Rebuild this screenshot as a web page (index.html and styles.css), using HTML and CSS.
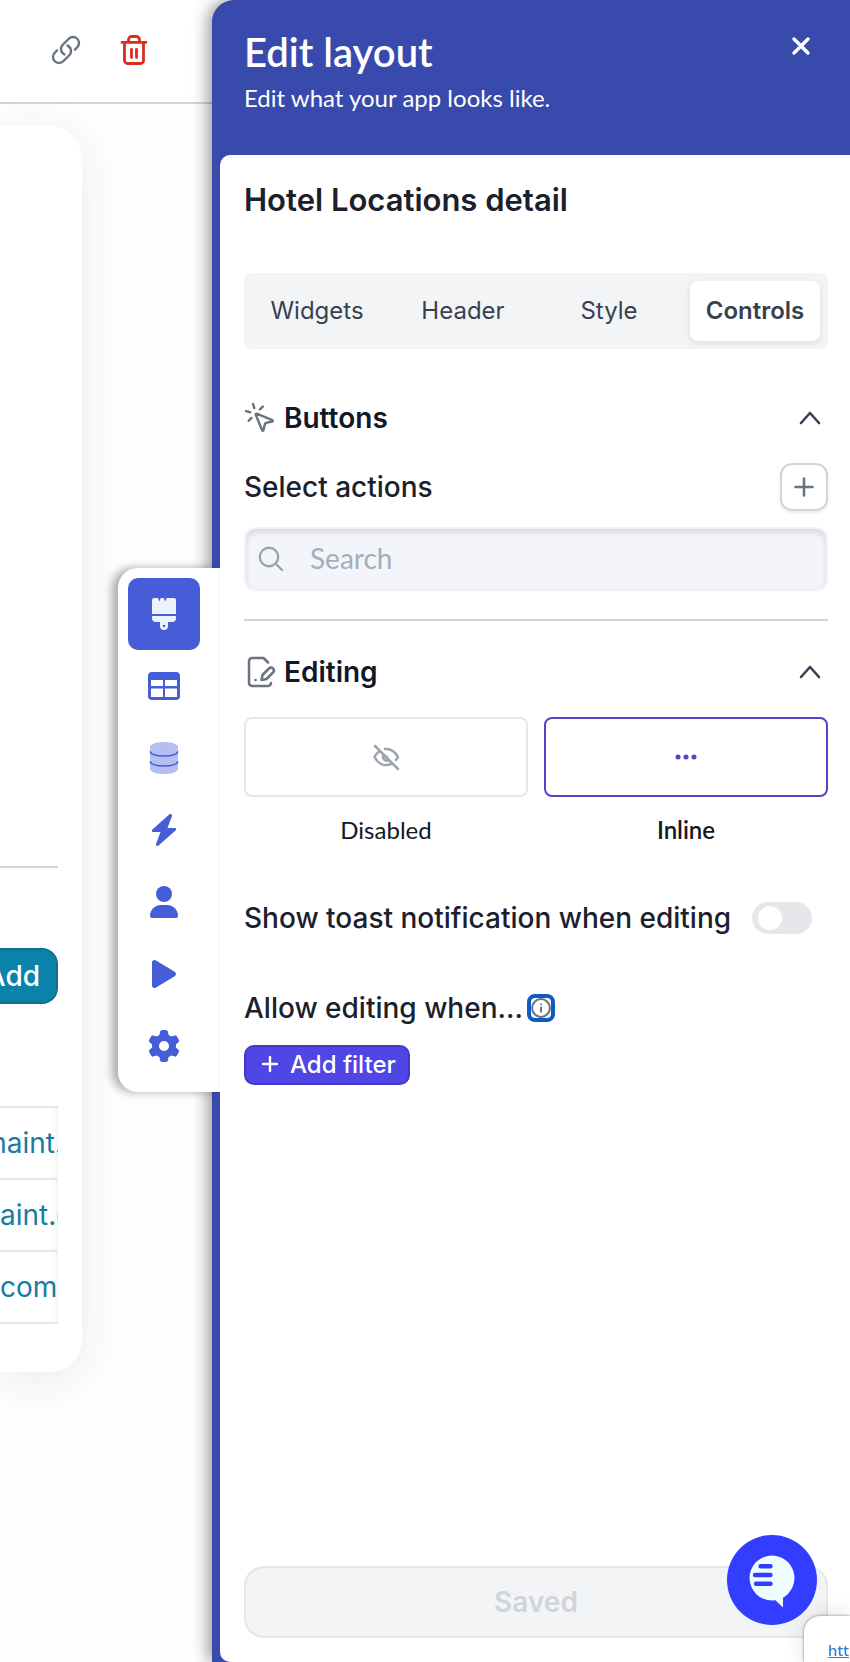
FILE: index.html
```html
<!DOCTYPE html>
<html lang="en">
<head>
<meta charset="utf-8">
<meta name="viewport" content="width=device-width, initial-scale=1">
<title>Edit layout</title>
<link rel="stylesheet" href="styles.css">
</head>
<body>
<div class="app">
  <main class="preview">
    <header class="topbar">
      <button class="icon-button" type="button" aria-label="Copy link">
        <svg width="32" height="32" viewBox="0 0 24 24" fill="none" stroke="#6b7280" stroke-width="1.800" stroke-linecap="round" stroke-linejoin="round"><path d="M13.19 8.688a4.5 4.5 0 0 1 1.242 7.244l-4.5 4.5a4.5 4.5 0 0 1-6.364-6.364l1.757-1.757m13.35-.622 1.757-1.757a4.5 4.5 0 0 0-6.364-6.364l-4.5 4.5a4.5 4.5 0 0 0 1.242 7.244"/></svg>
      </button>
      <button class="icon-button" type="button" aria-label="Delete">
        <svg width="32" height="32" viewBox="0 0 32 32" fill="none" stroke="#d92d20" stroke-width="2.800" stroke-linecap="round" stroke-linejoin="round"><path d="M4 8.300h24M6.500 8.500v18a3 3 0 0 0 3 3h13a3 3 0 0 0 3-3v-18M10.500 8V5.500a3 3 0 0 1 3-3h5a3 3 0 0 1 3 3V8M13.500 15.500v8M18.500 15.500v8"/></svg>
      </button>
    </header>
    <div class="stage">
      <section class="card">
        <hr class="card-rule">
        <div class="card-actions"><button class="add-button" type="button">Add</button></div>
        <ul class="mail-list">
          <li class="mail-row mail-row-end"><a href="#">maint.</a></li>
          <li class="mail-row"><a href="#">aint.c</a></li>
          <li class="mail-row"><a href="#">com</a></li>
        </ul>
      </section>
    </div>
  </main>

  <aside class="panel">
    <nav class="rail" aria-label="Editor sections">
      <button class="rail-item rail-item-active" type="button" aria-label="Layout">
        <svg width="32" height="32" viewBox="0 0 32 32" fill="#eef2ff"><path d="M6 0h4l1.300 3.500L12.700 0h3l1.500 3.500L18.700 0H26a2 2 0 0 1 2 2v14H4V2a2 2 0 0 1 2-2z"/><path fill-rule="evenodd" d="M4 18h24v2a4 4 0 0 1-4 4h-4v4a4 4 0 0 1-8 0v-4H8a4 4 0 0 1-4-4zM16 26.800a1.200 1.200 0 1 0 0 2.400 1.200 1.200 0 0 0 0-2.400z"/></svg>
      </button>
      <button class="rail-item" type="button" aria-label="Tables">
        <svg width="32" height="32" viewBox="0 0 32 32"><path fill="#465dd8" fill-rule="evenodd" d="M4 2h24a4 4 0 0 1 4 4v20a4 4 0 0 1-4 4H4a4 4 0 0 1-4-4V6a4 4 0 0 1 4-4zM3 10v6h12v-6zM17 10v6h12v-6zM3 18.500V27h12v-8.500zM17 18.500V27h12v-8.500z"/></svg>
      </button>
      <button class="rail-item" type="button" aria-label="Data">
        <svg width="32" height="32" viewBox="0 0 32 32"><path fill="#b4bef0" d="M2 5c0-2.800 6.300-5 14-5s14 2.200 14 5v22c0 2.800-6.300 5-14 5S2 29.800 2 27z"/><path fill="none" stroke="#465dd8" stroke-width="1.600" d="M2 9.500c1 2.700 6.700 4.500 14 4.500s13-1.800 14-4.500M2 19.500c1 2.700 6.700 4.500 14 4.500s13-1.800 14-4.500"/></svg>
      </button>
      <button class="rail-item" type="button" aria-label="Actions">
        <svg width="32" height="32" viewBox="0 0 32 32" fill="#465dd8"><path d="M21.500.3c1.600-.9 3 .3 2.400 2L19.500 14h7.300c1.400 0 1.800 1.600.8 2.500L10.500 31.600c-1.500 1-3-.3-2.400-1.900L12.500 18H5.200c-1.400 0-1.800-1.600-.8-2.500z"/></svg>
      </button>
      <button class="rail-item" type="button" aria-label="Users">
        <svg width="32" height="32" viewBox="0 0 32 32" fill="#465dd8"><circle cx="16" cy="8" r="8"/><path d="M2 30c0-6 4.800-11 10.500-11h7C25.200 19 30 24 30 30c0 1.200-.8 2-2 2H4c-1.200 0-2-.8-2-2z"/></svg>
      </button>
      <button class="rail-item" type="button" aria-label="Preview">
        <svg width="32" height="32" viewBox="0 0 32 32" fill="#465dd8"><path d="M4 4.500c0-2.200 2.200-3.200 4-2l18.700 11.300c1.700 1.100 1.700 3.300 0 4.400L8 29.500c-1.800 1.200-4 .2-4-2z"/></svg>
      </button>
      <button class="rail-item" type="button" aria-label="Settings">
        <svg width="32" height="32" viewBox="0 0 512 512" fill="#465dd8"><path d="M495.900 166.600c3.200 8.700.5 18.400-6.400 24.600l-43.300 39.400c1.100 8.300 1.700 16.800 1.700 25.400s-.6 17.100-1.700 25.400l43.300 39.400c6.900 6.200 9.600 15.900 6.400 24.600-4.400 11.900-9.700 23.300-15.800 34.300l-4.700 8.100c-6.600 11-14 21.400-22.100 31.200-5.900 7.200-15.700 9.600-24.500 6.800l-55.700-17.700c-13.400 10.300-28.200 18.900-44 25.400l-12.500 57.100c-2 9.100-9 16.300-18.200 17.800-13.800 2.300-28 3.500-42.500 3.500s-28.700-1.200-42.500-3.500c-9.200-1.500-16.200-8.700-18.200-17.800l-12.500-57.100c-15.800-6.500-30.600-15.100-44-25.400L83.100 425.900c-8.800 2.800-18.600.3-24.500-6.800-8.100-9.800-15.500-20.200-22.100-31.200l-4.700-8.100c-6.100-11-11.400-22.400-15.800-34.300-3.200-8.700-.5-18.400 6.400-24.600l43.300-39.400C64.600 273.100 64 264.600 64 256s.6-17.100 1.700-25.400L22.400 191.200c-6.900-6.200-9.600-15.900-6.400-24.600 4.400-11.900 9.700-23.300 15.800-34.300l4.700-8.100c6.600-11 14-21.400 22.100-31.200 5.900-7.200 15.700-9.600 24.500-6.800l55.700 17.700c13.400-10.300 28.200-18.900 44-25.400l12.500-57.100c2-9.100 9-16.300 18.200-17.800C227.300 1.200 241.500 0 256 0s28.700 1.200 42.500 3.500c9.200 1.500 16.200 8.700 18.200 17.800l12.500 57.100c15.800 6.500 30.600 15.100 44 25.400l55.700-17.700c8.800-2.800 18.600-.3 24.500 6.800 8.100 9.800 15.500 20.200 22.100 31.200l4.700 8.100c6.100 11 11.400 22.400 15.800 34.300zM256 336a80 80 0 1 0 0-160 80 80 0 1 0 0 160z"/></svg>
      </button>
    </nav>

    <header class="panel-head">
      <div>
        <h1 class="panel-title">Edit layout</h1>
        <p class="panel-subtitle">Edit what your app looks like.</p>
      </div>
      <button class="close-button" type="button" aria-label="Close">
        <svg width="20" height="20" viewBox="0 0 20 20" fill="none" stroke="#fff" stroke-width="3.400" stroke-linecap="round"><path d="M3 3l14 14M17 3L3 17"/></svg>
      </button>
    </header>

    <div class="panel-body">
      <h2 class="page-title">Hotel Locations detail</h2>

      <div class="tabs" role="tablist">
        <button class="tab" type="button" role="tab">Widgets</button>
        <button class="tab" type="button" role="tab">Header</button>
        <button class="tab" type="button" role="tab">Style</button>
        <button class="tab tab-active" type="button" role="tab" aria-selected="true">Controls</button>
      </div>

      <section class="group">
        <button class="group-head" type="button" aria-expanded="true">
          <svg width="32" height="32" viewBox="0.8 0.8 22.500 22.500" fill="none" stroke="#6b7280" stroke-width="1.700" stroke-linecap="round" stroke-linejoin="round"><path d="M14 4.100 12 6M5.100 8l-2.900-.8M6 12l-1.900 2M7.200 2.200 8 5.100M9.037 9.690a.498.498 0 0 1 .653-.653l11 4.500a.5.5 0 0 1-.074.949l-4.349 1.041a1 1 0 0 0-.740.739l-1.040 4.350a.5.5 0 0 1-.950.074z"/></svg>
          <span class="group-title">Buttons</span>
          <svg class="chevron" width="24" height="24" viewBox="0 0 24 24" fill="none" stroke="#374151" stroke-width="2.600" stroke-linecap="round" stroke-linejoin="round"><path d="M3 17l9-10 9 10"/></svg>
        </button>
        <div class="action-row">
          <label class="field-label" for="search">Select actions</label>
          <button class="plus-button" type="button" aria-label="Add action">
            <svg width="20" height="20" viewBox="0 0 20 20" fill="none" stroke="#6b7280" stroke-width="2.600" stroke-linecap="round"><path d="M10 1.500v17M1.500 10h17"/></svg>
          </button>
        </div>
        <div class="search">
          <svg width="26" height="26" viewBox="0 0 26 26" fill="none" stroke="#9ca3af" stroke-width="2.400" stroke-linecap="round"><circle cx="11" cy="11" r="9.200"/><path d="M18 18l6 6"/></svg>
          <input class="search-input" id="search" type="search" placeholder="Search">
        </div>
      </section>

      <section class="group group-divided">
        <button class="group-head" type="button" aria-expanded="true">
          <svg width="32" height="32" viewBox="0 0 32 32" fill="none" stroke="#6b7280" stroke-width="2.500" stroke-linecap="round" stroke-linejoin="round"><path d="M24 6.500 19.500 2H8a3 3 0 0 0-3 3v22a3 3 0 0 0 3 3h16a3 3 0 0 0 3-3"/><path d="M17.500 24l1-5 6.500-6.500a2.800 2.800 0 0 1 4 4L22.500 23zM11.500 24h.1"/></svg>
          <span class="group-title">Editing</span>
          <svg class="chevron" width="24" height="24" viewBox="0 0 24 24" fill="none" stroke="#374151" stroke-width="2.600" stroke-linecap="round" stroke-linejoin="round"><path d="M3 17l9-10 9 10"/></svg>
        </button>
        <div class="options">
          <button class="option" type="button" aria-pressed="false">
            <span class="option-box">
              <svg width="28" height="28" viewBox="0 0 28 28" fill="none" stroke="#9ca3af" stroke-width="2.500" stroke-linecap="round" stroke-linejoin="round"><path d="M3 3l23 23M13 6c6-.5 10 2.500 13 8-.6 1.200-1.200 2-2 2.800M7 8.500C5.200 9.800 3.700 11.700 2.500 14c4 7.500 10.500 9.500 16.500 7M11.500 12a4 4 0 0 0 5 5.500M14.500 13.500v1"/></svg>
            </span>
            <span class="option-label">Disabled</span>
          </button>
          <button class="option option-active" type="button" aria-pressed="true">
            <span class="option-box">
              <svg width="24" height="8" viewBox="0 0 24 8" fill="#4f46c8"><circle cx="4" cy="4" r="2.500"/><circle cx="12" cy="4" r="2.500"/><circle cx="20" cy="4" r="2.500"/></svg>
            </span>
            <span class="option-label">Inline</span>
          </button>
        </div>
        <div class="toggle-row">
          <label class="field-label" for="toast">Show toast notification when editing</label>
          <input class="toggle" id="toast" type="checkbox" role="switch">
        </div>
        <div class="filter-row">
          <span class="field-label">Allow editing when...</span>
          <button class="info-button" type="button" aria-label="More information">
            <svg width="20" height="20" viewBox="0 0 22 22" fill="none" stroke="#6b7280" stroke-width="2.200" stroke-linecap="round"><circle cx="11" cy="11" r="9.800"/><path d="M11 10.500v4.500M11 6.800v.1"/></svg>
          </button>
        </div>
        <button class="filter-button" type="button">
          <svg width="18" height="18" viewBox="0 0 18 18" fill="none" stroke="#fff" stroke-width="2.400" stroke-linecap="round"><path d="M10 2v14M3 9h14"/></svg>
          Add filter
        </button>
      </section>

      <button class="save-button" type="button" disabled>Saved</button>
    </div>
  </aside>
</div>

<button class="chat-button" type="button" aria-label="Open chat">
  <svg width="90" height="90" viewBox="0 0 90 90"><path fill="#f0fdff" d="M45 20.500a22.500 22.500 0 1 1 0 45 22.500 22.500 0 0 1 0-45z"/><path fill="#f0fdff" d="M46 63l10 9.500V60z"/><path fill="none" stroke="#333dff" stroke-width="4.400" stroke-linecap="round" d="M33.500 31.300h10M28 40h15.500M29 48.700h14.500"/></svg>
</button>
<div class="link-hint"><a href="#">http</a></div>
</body>
</html>
```
FILE: styles.css
```css
* { box-sizing: border-box; }

body {
  margin: 0;
  background: #fefefe;
  color: #1b212c;
  font-family: Inter, "Liberation Sans", sans-serif;
  overflow-x: hidden;
}

button, input {
  font: inherit;
  color: inherit;
}

button {
  padding: 0;
  border: 0;
  background: none;
  cursor: pointer;
}

svg { display: block; flex: none; }

h1, h2, p, ul { margin: 0; padding: 0; }

.app {
  display: grid;
  grid-template-columns: minmax(0, 1fr) minmax(0, 638px);
  min-height: 100vh;
}

/* App preview behind the editor panel */
.preview {
  display: flex;
  flex-direction: column;
  overflow: hidden;
}

.topbar {
  display: flex;
  align-items: center;
  justify-content: flex-end;
  gap: 36px;
  height: 104px;
  padding: 0 62px 2px 0;
  border-bottom: 2px solid #d1d5db;
  background: #fff;
}

.icon-button { width: 32px; height: 32px; }

.stage {
  display: flex;
  flex: 1;
  padding: 22px 130px 290px 0;
}

.card {
  display: flex;
  flex: 1;
  min-width: 0;
  flex-direction: column;
  justify-content: flex-end;
  padding: 0 24px 48px 0;
  border-radius: 0 32px 32px 0;
  background: #fff;
  box-shadow: 0 8px 48px rgba(31, 41, 55, 0.09);
}

.card-rule {
  width: 100%;
  height: 2px;
  margin: 0 0 80px;
  border: 0;
  background: #d1d5db;
}

.card-actions {
  display: flex;
  justify-content: flex-end;
  margin-bottom: 102px;
  overflow: hidden;
}

.add-button {
  flex: none;
  height: 56px;
  padding: 0 16px 0 44px;
  border: 2px solid #0e6f91;
  border-radius: 16px;
  background: #0b82ac;
  color: #fff;
  font-size: 28px;
  font-weight: 500;
}

.mail-list {
  border-top: 2px solid #e5e7eb;
  list-style: none;
  font-size: 28px;
}

.mail-row {
  display: flex;
  align-items: center;
  height: 72px;
  overflow: hidden;
  border-bottom: 2px solid #e5e7eb;
  white-space: nowrap;
  box-shadow: inset -8px 0 8px -8px rgba(0, 0, 0, 0.1);
}

.mail-row-end { justify-content: flex-end; }

.mail-row-end a { margin-right: -5px; }

.mail-row a {
  color: #1a7ba0;
  text-decoration: none;
}

/* Editor panel */
.panel {
  position: relative;
  display: flex;
  flex-direction: column;
  padding-left: 8px;
  border-radius: 22px 0 0 0;
  background: #384aab;
  box-shadow: -4px 0 16px rgba(0, 0, 0, 0.4);
}

.panel-head {
  display: flex;
  justify-content: space-between;
  align-items: flex-start;
  height: 155px;
  padding: 30px 39px 0 24px;
  color: #fff;
}

.panel-title {
  font: 600 40px/44px Lato, sans-serif;
}

.panel-subtitle {
  padding-top: 9px;
  font: 400 24px/30px Lato, sans-serif;
}

.close-button { padding: 6px 0; }

.panel-body {
  display: flex;
  flex: 1;
  flex-direction: column;
  padding: 24px 22px 24px 24px;
  border-radius: 10px 0 0 10px;
  background: #fff;
}

.page-title {
  font-size: 31px;
  font-weight: 600;
  line-height: 42px;
}

.tabs {
  display: grid;
  grid-template-columns: repeat(4, 1fr);
  gap: 16px;
  margin-top: 52px;
  padding: 8px;
  border-radius: 8px;
  background: #f3f4f6;
}

.tab {
  height: 60px;
  padding-bottom: 2px;
  border-radius: 8px;
  color: #374151;
  font-size: 24px;
}

.tab-active {
  background: #fff;
  font-weight: 600;
  box-shadow: 0 2px 6px rgba(0, 0, 0, 0.1);
}

.group { margin-top: 49px; }

.group-divided {
  margin-top: 28px;
  padding-top: 31px;
  border-top: 2px solid #d1d5db;
}

.group-head {
  display: flex;
  align-items: center;
  gap: 8px;
  width: 100%;
  height: 40px;
  padding-right: 6px;
  color: #111827;
  text-align: left;
}

.group-title {
  font-size: 28px;
  font-weight: 600;
}

.chevron { margin-left: auto; }

.action-row {
  display: flex;
  align-items: center;
  justify-content: space-between;
  margin-top: 25px;
}

.field-label {
  font-size: 28px;
  font-weight: 450;
  line-height: 34px;
}

.plus-button {
  display: grid;
  place-items: center;
  width: 48px;
  height: 48px;
  border: 2px solid #d1d5db;
  border-radius: 12px;
  background: #fff;
  box-shadow: 0 2px 3px rgba(0, 0, 0, 0.08);
}

.search {
  display: flex;
  align-items: center;
  gap: 26px;
  height: 64px;
  margin-top: 16px;
  padding: 0 12px;
  border: 2px solid #f0f1f4;
  border-radius: 12px;
  background: #f3f5fa;
  box-shadow: inset 0 3px 6px rgba(0, 0, 0, 0.13);
}

.search-input {
  flex: 1;
  min-width: 0;
  padding: 0 0 3px;
  border: 0;
  outline: 0;
  background: none;
  font: 400 28px/34px Lato, sans-serif;
}

.search-input::placeholder { color: #a3aebd; opacity: 1; }

.options {
  display: grid;
  grid-template-columns: 1fr 1fr;
  gap: 16px;
  margin-top: 25px;
}

.option {
  color: #111827;
  font: 400 24px/30px Lato, sans-serif;
}

.option-box {
  display: grid;
  place-items: center;
  height: 80px;
  margin-bottom: 18px;
  border: 2px solid #e5e7eb;
  border-radius: 8px;
}

.option-active { font-weight: 600; }

.option-active .option-box { border-color: #4f46c8; }

.option-label { display: block; }

.toggle-row {
  display: flex;
  align-items: center;
  justify-content: space-between;
  margin-top: 56px;
  padding-right: 16px;
}

.toggle {
  width: 60px;
  height: 32px;
  margin: 0;
  padding: 4px 6px;
  border-radius: 16px;
  background: #e5e7eb;
  appearance: none;
}

.toggle::before {
  display: block;
  width: 24px;
  height: 24px;
  border-radius: 50%;
  background: #fff;
  content: "";
}

.toggle:checked { background: #4f46e5; }
.toggle:checked::before { margin-left: auto; }

.filter-row {
  display: flex;
  align-items: center;
  gap: 4px;
  margin-top: 56px;
}

.info-button {
  padding: 0;
  border: 4px solid #0b5cc4;
  border-radius: 8px;
}

.filter-button {
  display: flex;
  align-items: center;
  gap: 12px;
  height: 40px;
  margin-top: 20px;
  padding: 0 12px 2px 14px;
  border: 2px solid #4338ca;
  border-radius: 10px;
  background: #4f46e5;
  color: #fff;
  font-size: 24px;
  font-weight: 450;
}

.save-button {
  height: 72px;
  margin-top: auto;
  border: 2px solid #e5e7eb;
  border-radius: 20px;
  background: #f3f4f6;
  color: #d1d5db;
  font-size: 28px;
  font-weight: 600;
}

/* Icon rail attached to the panel's left edge */
.rail {
  position: absolute;
  top: 568px;
  right: calc(100% - 8px);
  padding: 10px 18px 10px 10px;
  border-right: 2px solid #f9fafb;
  border-radius: 20px 0 0 20px;
  background: #fff;
  box-shadow: -6px 0 10px rgba(0, 0, 0, 0.32);
  clip-path: inset(-20px 0 -20px -30px);
}

.rail-item {
  display: grid;
  place-items: center;
  width: 72px;
  height: 72px;
  border-radius: 10px;
}

.rail-item-active { background: #465dd8; }

/* Floating elements */
.chat-button {
  position: fixed;
  right: 33px;
  bottom: 37px;
  border-radius: 50%;
  background: #333dff;
}

.link-hint {
  position: fixed;
  right: 0;
  bottom: 0;
  width: 46px;
  height: 46px;
  padding: 24px 0 0 24px;
  overflow: hidden;
  border-radius: 16px 0 0 0;
  background: #fff;
  box-shadow: 0 0 3px rgba(0, 0, 0, 0.5), 0 0 24px rgba(0, 0, 0, 0.12);
  font: 500 15px/20px "Noto Sans", sans-serif;
}

.link-hint a { color: #1f7fe0; }
```
